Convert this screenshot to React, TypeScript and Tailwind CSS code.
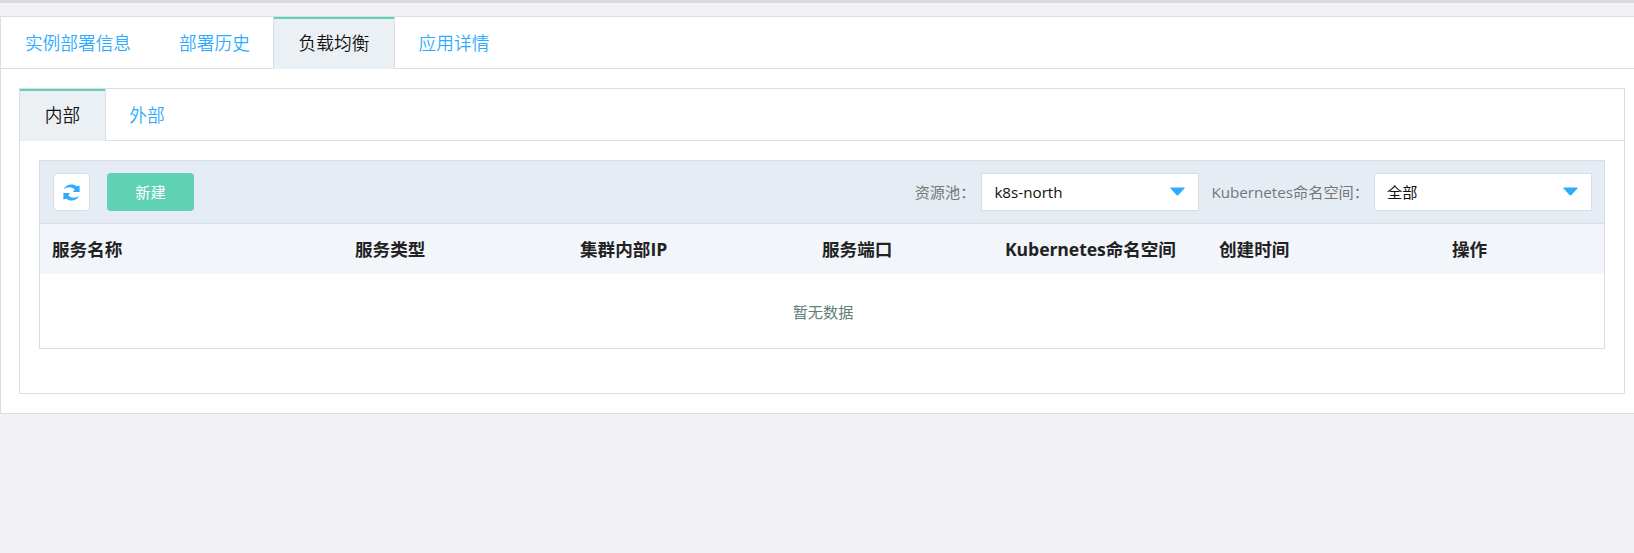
import React from "react";

type Tab = { label: string; width: string; active?: boolean };

const mainTabs: Tab[] = [
  { label: "实例部署信息", width: "w-[154px]" },
  { label: "部署历史", width: "w-[118px] pl-px" },
  { label: "负载均衡", width: "w-[122px]", active: true },
  { label: "应用详情", width: "w-[118px]" },
];

const scopeTabs: Tab[] = [
  { label: "内部", width: "w-[86px]", active: true },
  { label: "外部", width: "w-[82px]" },
];

const columns = ["服务名称", "服务类型", "集群内部IP", "服务端口", "Kubernetes命名空间", "创建时间", "操作"];

function TabBar({ tabs }: { tabs: Tab[] }) {
  return (
    <div className="flex h-[52px] shadow-[inset_0_-1px_0_#d8e0e7]">
      {tabs.map((tab, i) => (
        <button
          key={tab.label}
          className={`flex shrink-0 items-center justify-center text-[17.7px] leading-none font-[350] whitespace-nowrap ${tab.width} ${
            tab.active
              ? `border-r border-[#d8e0e7] bg-[#ebf0f4] text-[#111] ${i > 0 ? "border-l" : ""}`
              : "text-[#2dabff]"
          }`}
        >
          {tab.active ? (
            <span className="flex h-full w-full items-center justify-center border-t-2 border-[#5fd2b4]">{tab.label}</span>
          ) : (
            <span className="pt-0.5">{tab.label}</span>
          )}
        </button>
      ))}
    </div>
  );
}

function RefreshIcon() {
  return (
    <svg viewBox="0 0 17 17" className="h-[17px] w-[17px] fill-[#2dabff]">
      <path d="M0.600 5.500C2.200 2.300 5 .5 8.400.5c2 0 3.800.6 5.300 1.800L16.600 1.600V8H9.800l2-2.300C10.400 4.300 8.800 3.300 6.600 3.300 4.300 3.300 2.400 4 .6 5.500Z" />
      <path d="M16.400 11.500c-1.600 3.200-4.400 5-7.800 5-2 0-3.800-.6-5.300-1.800L.4 15.400V9H7.200l-2 2.300c1.400 1.400 3 2.400 5.200 2.400 2.300 0 4.200-.7 6-2.200Z" />
    </svg>
  );
}

function Select({ value }: { value: string }) {
  return (
    <button className="flex h-[38px] w-[218px] items-center justify-between border border-[#d8e0e7] bg-white pr-[13px] pl-3 text-[15.2px] text-[#111]">
      <span>{value}</span>
      <svg viewBox="0 0 15 9" className="-mt-px h-[9px] w-[15px] fill-[#2dabff]">
        <path d="M.9.500h13.200q.9 0 .3.900L8.500 8q-1 .9-2 0L.6 1.400Q0 .500.900.500Z" />
      </svg>
    </button>
  );
}

export default function App() {
  return (
    <div className="h-[553px] overflow-hidden border-t-3 border-[#d5dce1] bg-[#f2f2f4] pt-[13px] font-['Open_Sans','Noto_Sans_CJK_SC',sans-serif]">
      <section className="h-[398px] border-y border-l border-[#d8e0e7] bg-white">
        <TabBar tabs={mainTabs} />
        <div className="mt-[19px] mr-[9px] ml-[18px] h-[306px] border border-[#d8e0e7]">
          <TabBar tabs={scopeTabs} />
          <div className="mx-[19px] mt-[19px] h-[189px] border border-[#d8e0e7]">
            <div className="flex h-[63px] items-center border-b border-[#d8e0e7] bg-[#e6ecf4] pr-3 pl-[13px]">
              <button className="mr-[17px] flex h-[38px] w-[37px] items-center justify-center rounded-[4px] border border-[#d8e0e7] bg-white">
                <RefreshIcon />
              </button>
              <button className="h-[38px] w-[87px] rounded-[4px] bg-[#5fd2b4] text-[15.2px] text-white">新建</button>
              <div className="ml-auto flex items-center text-[15.2px] text-[#777]">
                <span className="mr-[6px]">资源池：</span>
                <Select value="k8s-north" />
                <span className="mr-[5px] ml-3">Kubernetes命名空间：</span>
                <Select value="全部" />
              </div>
            </div>
            <div className="grid h-[50px] grid-cols-[303px_225px_242px_183px_214px_233px_1fr] items-center bg-[#f2f6fb] pt-px pl-3 text-[17.6px] font-bold whitespace-nowrap text-[#222]">
              {columns.map((name) => (
                <span key={name} className={name.startsWith("Kubernetes") ? "tracking-[-0.08px]" : ""}>
                  {name}
                </span>
              ))}
            </div>
            <div className="flex h-[74px] items-center justify-center pt-[3px] pl-0.5 text-[15.2px] text-[#5d7f78]">暂无数据</div>
          </div>
        </div>
      </section>
    </div>
  );
}
